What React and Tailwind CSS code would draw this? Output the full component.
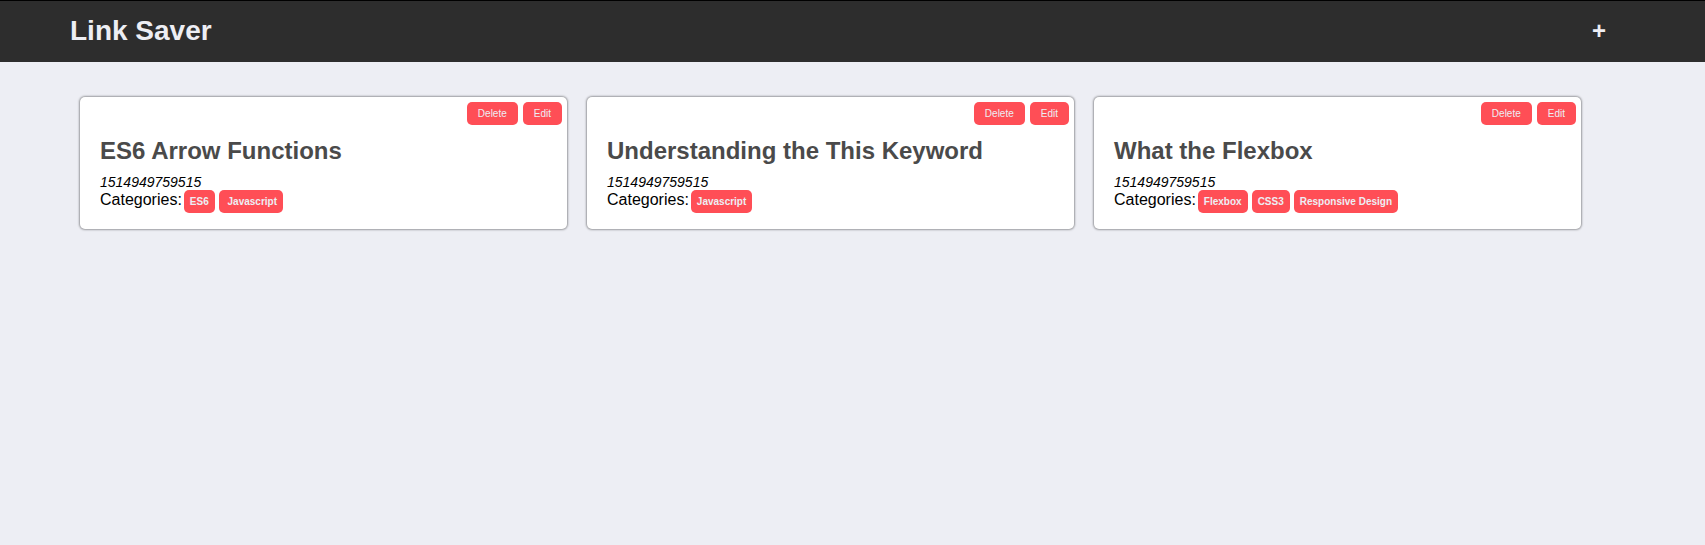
const links = [
  { title: "ES6 Arrow Functions", date: "1514949759515", tags: ["ES6", "\u00a0Javascript"] },
  { title: "Understanding the This Keyword", date: "1514949759515", tags: ["Javascript"] },
  { title: "What the Flexbox", date: "1514949759515", tags: ["Flexbox", "CSS3", "Responsive Design"] },
];

function CardButton({ children }) {
  return (
    <button type="button" className="h-[23px] rounded-[5px] bg-[#ff4e56] px-[11px] text-[10px] text-[#edeef4]">
      {children}
    </button>
  );
}

function LinkCard({ link }) {
  return (
    <article className="rounded-[5px] bg-white pb-4 shadow-[0_0_2px_1px_rgba(0,0,0,0.35)]">
      <div className="flex justify-end gap-[5px] px-[5px] pt-[5px]">
        <CardButton>Delete</CardButton>
        <CardButton>Edit</CardButton>
      </div>
      <div className="px-5">
        <h2 className="mt-3 text-2xl/7 font-bold text-[#4a4a4a]">{link.title}</h2>
        <p className="mt-2.5 text-sm/[15px] italic">{link.date}</p>
        <div className="flex flex-wrap">
          <span className="mr-0.5 text-base/5">Categories:</span>
          <ul className="flex flex-wrap gap-1">
            {link.tags.map((tag) => (
              <li key={tag} className="rounded-[5px] bg-[#ff4e56] px-[6px] text-[10px]/[23px] font-bold text-[#edeef4]">
                {tag}
              </li>
            ))}
          </ul>
        </div>
      </div>
    </article>
  );
}

export default function App() {
  return (
    <div className="min-h-screen bg-[#edeef4] font-['Liberation_Sans',Arial,sans-serif] text-black">
      <header className="flex h-[62px] items-center justify-between border-t border-black bg-[#2d2d2d] pr-[99px] pb-0.5 pl-[70px] text-[#edeef4]">
        <h1 className="text-[28px]/8 font-bold">Link Saver</h1>
        <button type="button" aria-label="Add link" className="text-2xl/7 font-bold">
          +
        </button>
      </header>
      <main className="grid grid-cols-3 items-start gap-5 pt-[35px] pr-[124px] pl-20">
        {links.map((link) => (
          <LinkCard key={link.title} link={link} />
        ))}
      </main>
    </div>
  );
}
